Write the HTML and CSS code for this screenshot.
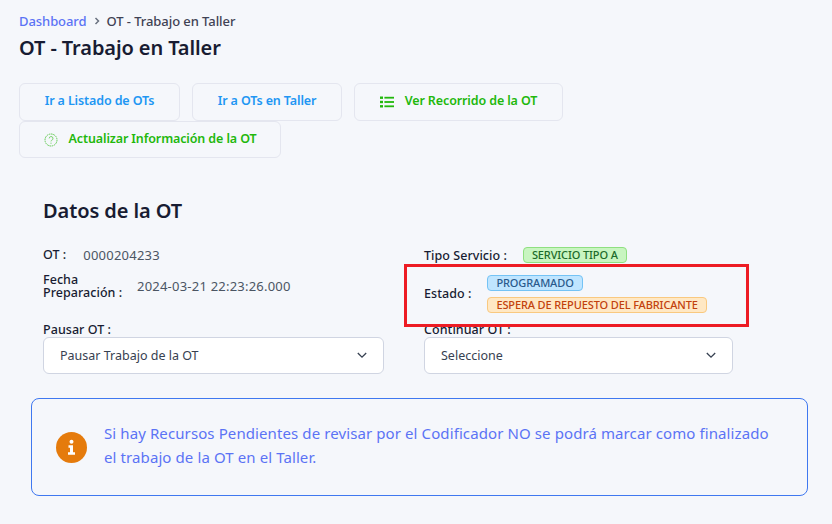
FILE: index.html
```html
<!DOCTYPE html>
<html lang="es">
<head>
<meta charset="utf-8">
<title>OT - Trabajo en Taller</title>
<link rel="stylesheet" href="styles.css">
</head>
<body>
<nav class="crumbs"><a class="crumb-link">Dashboard</a>
<svg class="crumb-sep" width="6" height="8" viewBox="0 0 6 8"><path d="M1.500 1 4.500 4 1.500 7" fill="none" stroke="#6b7280" stroke-width="1.500"/></svg>
<span>OT - Trabajo en Taller</span></nav>
<h1 class="title">OT - Trabajo en Taller</h1>
<div class="actions">
  <button class="btn btn-blue b1"><span class="btn-text">Ir a Listado de OTs</span></button>
  <button class="btn btn-blue b2"><span class="btn-text">Ir a OTs en Taller</span></button>
  <button class="btn btn-green b3">
    <svg width="14" height="12" viewBox="0 0 14 12"><g fill="#22b80c"><rect x="0" y="0.500" width="3" height="2.400"/><rect x="0" y="4.800" width="3" height="2.400"/><rect x="0" y="9.100" width="3" height="2.400"/><rect x="4.400" y="0.800" width="9.600" height="1.800"/><rect x="4.400" y="5.100" width="9.600" height="1.800"/><rect x="4.400" y="9.400" width="9.600" height="1.800"/></g></svg>
    <span class="btn-text">Ver Recorrido de la OT</span></button>
  <button class="btn btn-green b4">
    <svg width="14" height="14" viewBox="0 0 14 14"><circle cx="7" cy="7" r="6" fill="none" stroke="#5fc94f" stroke-width="1" stroke-dasharray="1.600 0.700"/><path d="M5.200 5.400a1.900 1.900 0 1 1 2.600 1.800c-.6.300-.8.600-.8 1.200" fill="none" stroke="#7cd46e" stroke-width="1"/><circle cx="7" cy="10.200" r=".6" fill="#7cd46e"/></svg>
    <span class="btn-text">Actualizar Información de la OT</span></button>
</div>
<section class="card">
  <h2 class="card-title">Datos de la OT</h2>
  <div class="grid">
    <div class="col">
      <div class="row r-ot"><span class="lbl">OT :</span><span class="val val-ot">0000204233</span></div>
      <div class="row r-fecha"><span class="lbl lbl-wrap">Fecha Preparación :</span><span class="val">2024-03-21 22:23:26.000</span></div>
      <div class="field">
        <label class="lbl">Pausar OT :</label>
        <div class="select">Pausar Trabajo de la OT<svg width="10" height="7" viewBox="0 0 10 7"><path d="M.8 1 5 5.200 9.200 1" fill="none" stroke="#374151" stroke-width="1.300"/></svg></div>
      </div>
    </div>
    <div class="col col-right">
      <div class="row r-ot"><span class="lbl">Tipo Servicio :</span><span class="badge badge-green">SERVICIO TIPO A</span></div>
      <div class="row r-estado"><span class="lbl">Estado :</span>
        <div class="badges"><span class="badge badge-blue">PROGRAMADO</span><span class="badge badge-orange">ESPERA DE REPUESTO DEL FABRICANTE</span></div>
      </div>
      <div class="field">
        <label class="lbl">Continuar OT :</label>
        <div class="select">Seleccione<svg width="10" height="7" viewBox="0 0 10 7"><path d="M.8 1 5 5.200 9.200 1" fill="none" stroke="#374151" stroke-width="1.300"/></svg></div>
      </div>
    </div>
  </div>
</section>
<div class="notice">
  <svg class="notice-icon" width="31" height="31" viewBox="0 0 31 31"><circle cx="15.500" cy="15.500" r="15.500" fill="#e57b0c"/><circle cx="15.500" cy="9.800" r="2" fill="#fff"/><path d="M12.500 13.300h4.500v7h2v2.400h-7v-2.400h2v-4.600h-1.500z" fill="#fff"/></svg>
  <p class="notice-text">Si hay Recursos Pendientes de revisar por el Codificador NO se podrá marcar como finalizado el trabajo de la OT en el Taller.</p>
</div>
<div class="highlight"></div>
</body>
</html>
```
FILE: styles.css
```css
* { box-sizing: border-box; }
html, body { margin: 0; height: 524px; overflow: hidden; }
body {
  position: relative;
  background: #f5f7fb;
  padding: 12px 24px 0 19px;
  font-family: "Noto Sans", "Open Sans", sans-serif;
  color: #3f4254;
}
.crumbs { display: flex; align-items: center; gap: 7px; height: 17px; font-size: 13px; letter-spacing: -.07px; font-weight: 500; }
.crumb-link { color: #5b73f5; }
.title { margin: 5px 0 0; height: 27px; line-height: 27px; font-size: 20px; font-weight: 600; letter-spacing: -.1px; color: #181c32; }
.actions { display: flex; flex-wrap: wrap; gap: 0 12px; width: 600px; margin-top: 22px; }
.btn {
  display: inline-flex; align-items: center; justify-content: center; gap: 11px;
  height: 38px; padding: 0; border: 1px solid #e4e6ef; border-radius: 6px;
  background: transparent; font: 600 12.500px "Noto Sans", sans-serif; letter-spacing: -.12px;
}
.btn-text { margin-bottom: 3px; }
.btn-blue { color: #2196f3; }
.btn-green { color: #22b80c; }
.b1 { width: 161px; }
.b2 { width: 150px; }
.b3 { width: 209px; }
.b4 { width: 262px; height: 37px; }
.card { padding: 0 24px; margin-top: 39px; }
.card-title { margin: 0; height: 28px; line-height: 28px; font-size: 20px; font-weight: 600; letter-spacing: -.1px; color: #181c32; }
.grid { display: grid; grid-template-columns: 341px 309px; column-gap: 40px; margin-top: 20px; }
.col { display: flex; flex-direction: column; }
.col-right { padding-top: 1px; }
.row { display: flex; align-items: center; }
.r-ot { height: 17px; margin-top: 1px; gap: 16px; }
.r-fecha { height: 32px; margin: 7px 0 10px; gap: 14px; }
.r-estado { height: 38px; margin-top: 10px; gap: 16px; }
.lbl { display: block; font-size: 12.500px; line-height: 13px; font-weight: 500; color: #181c32; letter-spacing: .05px; }
.lbl-wrap { width: 80px; }
.val { font-size: 13px; letter-spacing: .22px; color: #4b5563; }
.val-ot { margin-left: 1px; }
.field { margin-top: auto; padding-top: 11px; display: flex; flex-direction: column; gap: 1px; }
.select {
  display: flex; align-items: center; justify-content: space-between;
  height: 37px; padding: 0 16px; background: #fff;
  border: 1px solid #d0d5e2; border-radius: 6px;
  font-size: 12.500px; color: #374151;
}
.badge {
  display: inline-block; align-self: flex-start; height: 16px; line-height: 14px; padding: 0 8px;
  border: 1px solid; border-radius: 4px; font-size: 11px; font-weight: 500; letter-spacing: -.12px; white-space: nowrap;
}
.badge-green { background: #c8f5c0; border-color: #8fe080; color: #1c6b2a; }
.badge-blue { background: #bfe5ff; border-color: #74c3f5; color: #2a5a8c; }
.badge-orange { background: #ffe8c4; border-color: #f9c980; color: #c2410c; }
.badges { display: flex; flex-direction: column; gap: 6px; margin-top: 2px; }
.notice {
  display: flex; align-items: center; gap: 17px; width: 777px; height: 98px; margin: 24px 0 0 12px;
  padding: 0 36px 0 24px; border: 1px solid #3f78f0; border-radius: 8px;
}
.notice-icon { flex: none; }
.notice-text { margin: 0 0 4px; font-size: 15px; line-height: 24px; color: #5b73f5; letter-spacing: .1px; }
.highlight { position: absolute; left: 404px; top: 264px; width: 345px; height: 63px; border: 3px solid #ed1c24; }
```
